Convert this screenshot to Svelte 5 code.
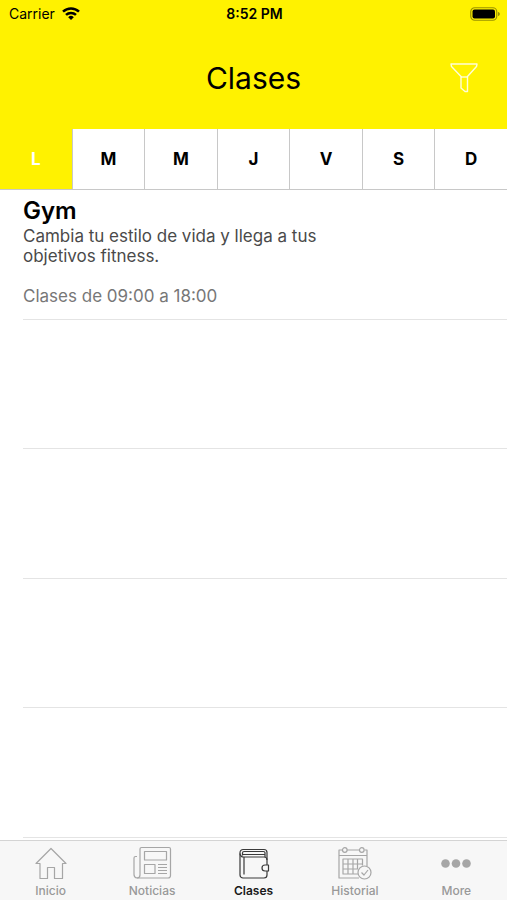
<script>
	const days = ['L', 'M', 'M', 'J', 'V', 'S', 'D'];
	const tabs = ['Inicio', 'Noticias', 'Clases', 'Historial', 'More'];

	const classes = [
		{
			name: 'Gym',
			text: 'Cambia tu estilo de vida y llega a tus objetivos fitness.',
			hours: 'Clases de 09:00 a 18:00'
		}
	];

	// the list keeps its separators down to the tab bar
	const rows = Array.from({ length: 5 }, (_, i) => classes[i] ?? null);

	let day = $state(0);
	let tab = $state('Clases');
</script>

<div class="screen">
	<header>
		<div class="status">
			<span class="carrier">
				Carrier
				<svg width="18" height="14" viewBox="0 0 18 14" fill="none" stroke="#000" stroke-width="2.5">
					<path d="M1 4.700a11.500 11.500 0 0 1 16 0" />
					<path d="M4 7.900a7.200 7.200 0 0 1 10 0" />
					<path d="M6.200 10.200a4 4 0 0 1 5.600 0L9 13.100z" fill="#000" stroke="none" />
				</svg>
			</span>
			<span class="time">8:52 PM</span>
			<svg class="battery" width="30" height="14" viewBox="0 0 30 14">
				<rect x="0.75" y="0.75" width="26" height="12.5" rx="4" fill="none" stroke="#000" stroke-opacity="0.4" stroke-width="1.2" />
				<rect x="2.5" y="2.5" width="22.5" height="9" rx="2" />
				<path d="M28 5v4c1.2-.4 1.8-1.1 1.8-2s-.6-1.6-1.8-2z" fill-opacity="0.4" />
			</svg>
		</div>
		<div class="title">
			<h1>Clases</h1>
			<button class="filter" aria-label="Filtrar">
				<svg width="30" height="30" viewBox="0 0 30 30" fill="none" stroke="#fff" stroke-opacity="0.85" stroke-width="1.4" stroke-linejoin="round">
					<path d="M2 1h26l-.5 2.500L18.500 13.500v15h-2.500L12 25V13.500L2.500 3.500z" />
					<path d="M12 14h6.500" />
				</svg>
			</button>
		</div>
	</header>

	<div class="days">
		{#each days as label, i}
			<button class:active={day === i} onclick={() => (day = i)}>{label}</button>
		{/each}
	</div>

	<ul>
		{#each rows as row}
			<li>
				{#if row}
					<h2>{row.name}</h2>
					<p class="text">{row.text}</p>
					<p class="hours">{row.hours}</p>
				{/if}
			</li>
		{/each}
	</ul>

	<nav>
		{#each tabs as name (name)}
			<button class:current={tab === name} onclick={() => (tab = name)}>
				<svg width="40" height="36" viewBox="0 0 40 36" fill="none" stroke="currentColor" stroke-width="1.2" stroke-linejoin="round">
					{#if name === 'Inicio'}
						<path d="M20 2.500L5 17.500H9V32.500h7.500V21.500h7v11h8V17.500h3.500z" />
					{:else if name === 'Noticias'}
						<path d="M8 3a1.500 1.500 0 0 1 1.500-1.500h27.500A1.500 1.500 0 0 1 38.500 3v26.500a2.500 2.500 0 0 1-2.500 2.500H5a3.500 3.500 0 0 1-3-3.500V12a1.500 1.500 0 0 1 1.500-1.500h1.500" />
						<path d="M8 3v26a3 3 0 0 1-3 3" />
						<rect x="12.500" y="5.500" width="22" height="8.500" />
						<rect x="12.500" y="18.500" width="10.500" height="9" />
						<path d="M26 18.500h9M26 21.500h9M26 24.500h9M26 27.500h9" />
					{:else if name === 'Clases'}
						<path d="M33 19V11.500M33 25v4a3 3 0 0 1-3 3H9a3 3 0 0 1-3-3V6.500a3 3 0 0 1 3-3h21a3 3 0 0 1 3 3v5" />
						<path d="M6 7.500a3.500 3.500 0 0 0 3.500 3.500H30a3 3 0 0 1 3 3" />
						<path d="M8.500 9.500V7a1.500 1.500 0 0 1 1.500-1.500h19.500a1.500 1.500 0 0 1 1.500 1.500v4M8.500 8.500H31M10 11v17.500" />
						<path d="M34.500 19H31a3 3 0 0 0 0 6h3.500z" />
					{:else if name === 'Historial'}
						<path d="M7.500 4H4v28h20M12 4h12.500M29.500 4H32v16M4 9.500h28" />
						<circle cx="9.800" cy="4" r="2.300" />
						<circle cx="26.800" cy="4" r="2.300" />
						<path d="M23 28H8V13h19.500v6.500M13 13v15M18 13v15M22.500 13v10M8 18h19.500M8 23h15" />
						<circle cx="29.500" cy="26.500" r="6.500" />
						<path d="M26.500 26.500l2.500 2.500 4-5" />
					{:else}
						<g fill="currentColor" stroke="none">
							<circle cx="9.500" cy="17.500" r="4.300" />
							<circle cx="20" cy="17.500" r="4.300" />
							<circle cx="30.500" cy="17.500" r="4.300" />
						</g>
					{/if}
				</svg>
				<span>{name}</span>
			</button>
		{/each}
	</nav>
</div>

<style>
	:global(body) {
		margin: 0;
	}
	.screen {
		display: flex;
		flex-direction: column;
		height: 100vh;
		background: #fff;
		color: #000;
		font-family: Inter, 'Liberation Sans', sans-serif;
	}
	button {
		margin: 0;
		padding: 0;
		border: 0;
		background: none;
		color: inherit;
		font: inherit;
		cursor: pointer;
	}
	svg {
		display: block;
	}
	header {
		background: #fff200;
	}
	.status {
		display: grid;
		grid-template-columns: 1fr auto 1fr;
		align-items: center;
		height: 27px;
		padding: 0 7px 0 9px;
		font-size: 14px;
	}
	.carrier {
		display: flex;
		align-items: center;
		gap: 7px;
	}
	.time {
		font-weight: 600;
	}
	.battery {
		justify-self: end;
	}
	.title {
		display: grid;
		grid-template-columns: 1fr auto 1fr;
		align-items: center;
		height: 102px;
		padding: 0 28px;
	}
	h1 {
		grid-column: 2;
		margin: 0;
		font-size: 30px;
		font-weight: 400;
	}
	.filter {
		justify-self: end;
	}
	.days {
		display: flex;
		border-bottom: 1px solid #c8c8c8;
	}
	.days button {
		flex: 1;
		height: 60px;
		font-size: 17px;
		font-weight: 700;
	}
	.days button + button {
		border-left: 1px solid #c8c8c8;
	}
	.days .active {
		background: #fff200;
		color: #fff;
	}
	ul {
		flex: 1;
		display: flex;
		flex-direction: column;
		margin: 0;
		padding: 0 0 2px 23px;
		list-style: none;
		overflow: auto;
	}
	li {
		flex: 1 0 auto;
		box-sizing: border-box;
		height: 129px;
		padding-top: 6px;
		border-bottom: 1px solid #e4e4e4;
	}
	h2 {
		margin: 0;
		font-size: 24px;
		font-weight: 600;
		line-height: 30px;
	}
	p {
		margin: 0;
		font-size: 17px;
		line-height: 20px;
	}
	.text {
		max-width: 300px;
		color: #4a4a4a;
	}
	.hours {
		margin-top: 20px;
		color: #777;
	}
	nav {
		display: flex;
		border-top: 1px solid #d4d4d4;
		background: #f7f7f7;
	}
	nav button {
		flex: 1;
		display: flex;
		flex-direction: column;
		align-items: center;
		height: 59px;
		padding-top: 5px;
		box-sizing: border-box;
		color: #999;
		font-size: 12px;
		font-weight: 500;
		line-height: 18px;
	}
	nav svg {
		opacity: 0.85;
	}
	nav .current {
		color: #1a1a1a;
		font-weight: 600;
	}
</style>
